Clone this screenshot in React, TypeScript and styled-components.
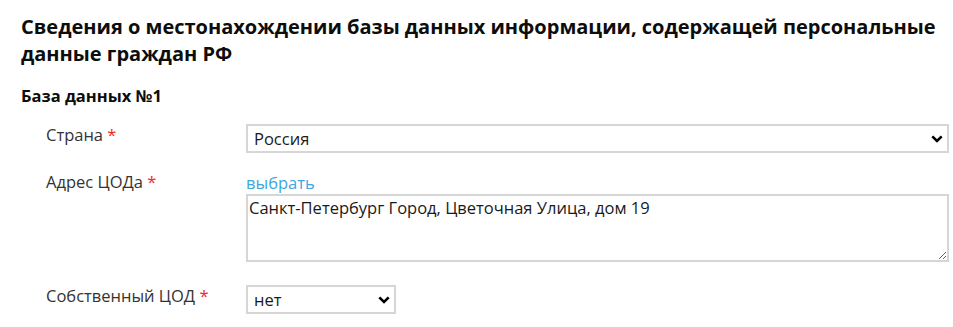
import React from "react";
import styled, { createGlobalStyle } from "styled-components";

const Global = createGlobalStyle`
  html, body { margin: 0; padding: 0; background: #fff; }
  body { font-family: "Open Sans", "Noto Sans", sans-serif; }
  * { box-sizing: border-box; }
`;

const Page = styled.div`
  padding: 13px 4px 0 21px;
  width: 953px;
`;

const Title = styled.h2`
  margin: 0;
  font-size: 20px;
  line-height: 27px;
  font-weight: 700;
  color: #0d0d0d;
`;

const Subtitle = styled.h3`
  margin: 19px 0 0;
  font-size: 16.5px;
  line-height: 20px;
  font-weight: 700;
  color: #0d0d0d;
`;

const Form = styled.div`
  display: flex;
  flex-direction: column;
  margin-top: 18px;
`;

const Row = styled.div<{ $mb?: number }>`
  display: grid;
  grid-template-columns: 200px 1fr;
  padding-left: 25px;
  margin-bottom: ${(p) => p.$mb ?? 18}px;
  align-items: start;
`;

const Label = styled.div`
  font-size: 16.5px;
  line-height: 21px;
  color: #333;
`;

const Req = styled.span`
  color: #f0282d;
`;

const Control = styled.div`
  display: flex;
  flex-direction: column;
  align-items: flex-start;
`;

const SelectWrap = styled.div<{ $w?: string }>`
  position: relative;
  width: ${(p) => p.$w ?? "100%"};
`;

const Select = styled.select`
  appearance: none;
  -webkit-appearance: none;
  width: 100%;
  height: 29px;
  border: 2px solid #d6d6d6;
  border-radius: 0;
  background: #fff;
  padding: 0 24px 0 6px;
  font-family: "Open Sans", "Noto Sans", sans-serif;
  font-size: 16.5px;
  line-height: 21px;
  color: #1a1a1a;
  outline: none;
`;

const Chevron = styled.svg`
  position: absolute;
  right: 6px;
  top: 50%;
  width: 12px;
  height: 8px;
  margin-top: -4px;
  pointer-events: none;
`;

const Link = styled.a`
  font-size: 16.5px;
  line-height: 21px;
  color: #3ea6e0;
  text-decoration: none;
  margin-top: 1px;
  cursor: pointer;
`;

const TextArea = styled.textarea`
  display: block;
  width: 100%;
  height: 68px;
  margin-top: 1px;
  border: 2px solid #d6d6d6;
  border-radius: 0;
  padding: 1px 1px;
  font-family: "Open Sans", "Noto Sans", sans-serif;
  font-size: 16.5px;
  line-height: 21px;
  color: #1a1a1a;
  outline: none;
  resize: vertical;
`;

const ChevronIcon = () => (
  <Chevron viewBox="0 0 12 8">
    <path d="M1.3 1.4 L6 6 L10.7 1.4" fill="none" stroke="#000" strokeWidth="2.6" />
  </Chevron>
);

export default function App() {
  return (
    <>
      <Global />
      <Page>
        <Title>
          Сведения о местонахождении базы данных информации, содержащей персональные данные граждан РФ
        </Title>
        <Subtitle>База данных №1</Subtitle>
        <Form>
          <Row>
            <Label>
              Страна <Req>*</Req>
            </Label>
            <Control>
              <SelectWrap>
                <Select defaultValue="ru">
                  <option value="ru">Россия</option>
                </Select>
                <ChevronIcon />
              </SelectWrap>
            </Control>
          </Row>
          <Row $mb={23}>
            <Label>
              Адрес ЦОДа <Req>*</Req>
            </Label>
            <Control>
              <Link>выбрать</Link>
              <TextArea defaultValue="Санкт-Петербург Город, Цветочная Улица, дом 19" />
            </Control>
          </Row>
          <Row>
            <Label>
              Собственный ЦОД <Req>*</Req>
            </Label>
            <Control>
              <SelectWrap $w="150px">
                <Select defaultValue="no">
                  <option value="no">нет</option>
                  <option value="yes">да</option>
                </Select>
                <ChevronIcon />
              </SelectWrap>
            </Control>
          </Row>
        </Form>
      </Page>
    </>
  );
}
